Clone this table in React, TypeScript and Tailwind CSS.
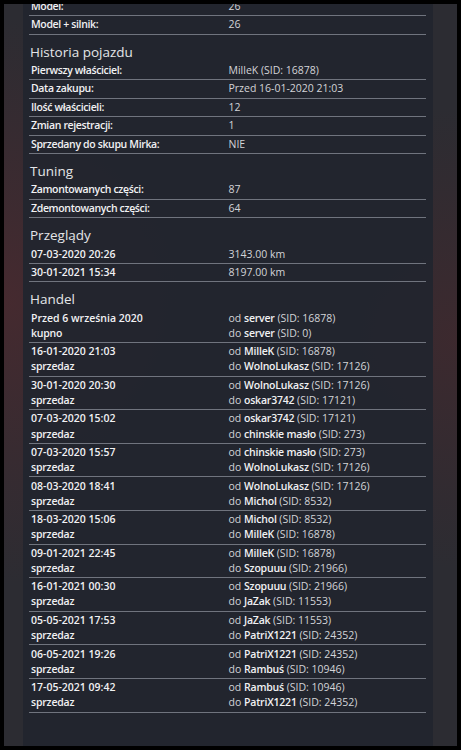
import React from "react";

type Pair = [string, string];

const basic: Pair[] = [
  ["Model:", "26"],
  ["Model + silnik:", "26"],
];

const history: Pair[] = [
  ["Pierwszy właściciel:", "MilleK (SID: 16878)"],
  ["Data zakupu:", "Przed 16-01-2020 21:03"],
  ["Ilość właścicieli:", "12"],
  ["Zmian rejestracji:", "1"],
  ["Sprzedany do skupu Mirka:", "NIE"],
];

const tuning: Pair[] = [
  ["Zamontowanych części:", "87"],
  ["Zdemontowanych części:", "64"],
];

const inspections: Pair[] = [
  ["07-03-2020 20:26", "3143.00 km"],
  ["30-01-2021 15:34", "8197.00 km"],
];

type Trade = {
  date: string;
  kind: string;
  from: [string, number];
  to: [string, number];
};

const trades: Trade[] = [
  { date: "Przed 6 września 2020", kind: "kupno", from: ["server", 16878], to: ["server", 0] },
  { date: "16-01-2020 21:03", kind: "sprzedaz", from: ["MilleK", 16878], to: ["WolnoLukasz", 17126] },
  { date: "30-01-2020 20:30", kind: "sprzedaz", from: ["WolnoLukasz", 17126], to: ["oskar3742", 17121] },
  { date: "07-03-2020 15:02", kind: "sprzedaz", from: ["oskar3742", 17121], to: ["chinskie masło", 273] },
  { date: "07-03-2020 15:57", kind: "sprzedaz", from: ["chinskie masło", 273], to: ["WolnoLukasz", 17126] },
  { date: "08-03-2020 18:41", kind: "sprzedaz", from: ["WolnoLukasz", 17126], to: ["Michol", 8532] },
  { date: "18-03-2020 15:06", kind: "sprzedaz", from: ["Michol", 8532], to: ["MilleK", 16878] },
  { date: "09-01-2021 22:45", kind: "sprzedaz", from: ["MilleK", 16878], to: ["Szopuuu", 21966] },
  { date: "16-01-2021 00:30", kind: "sprzedaz", from: ["Szopuuu", 21966], to: ["JaZak", 11553] },
  { date: "05-05-2021 17:53", kind: "sprzedaz", from: ["JaZak", 11553], to: ["PatriX1221", 24352] },
  { date: "06-05-2021 19:26", kind: "sprzedaz", from: ["PatriX1221", 24352], to: ["Rambuś", 10946] },
  { date: "17-05-2021 09:42", kind: "sprzedaz", from: ["Rambuś", 10946], to: ["PatriX1221", 24352] },
];

function Heading({ children }: { children: React.ReactNode }) {
  return (
    <h2 className="mt-[8px] pl-[1px] text-[13.5px] leading-[19px] text-[#e4e5e8]">
      {children}
    </h2>
  );
}

function PairRows({ rows, boldLabel = true }: { rows: Pair[]; boldLabel?: boolean }) {
  return (
    <div>
      {rows.map(([label, value]) => (
        <div
          key={label}
          className="grid grid-cols-2 border-b border-[#70747e] py-[1.25px] text-[10.5px] leading-[15.05px]"
        >
          <span
            className={`pl-[2px] text-[#f1f1f3] font-semibold ${
              boldLabel ? "tracking-[-0.35px]" : ""
            }`}
          >
            {label}
          </span>
          <span className="pl-[1px] text-[#d3d4d8]">{value}</span>
        </div>
      ))}
    </div>
  );
}

function Person({ dir, who }: { dir: string; who: [string, number] }) {
  return (
    <div>
      {dir} <span className="font-semibold text-[#f1f1f3] tracking-[-0.2px]">{who[0]}</span> (SID: {who[1]})
    </div>
  );
}

export default function App() {
  return (
    <div
      className="h-[750px] w-[461px] overflow-hidden bg-black p-[4px]"
      style={{ fontFamily: '"Open Sans", "Noto Sans", sans-serif' }}
    >
      <div className="flex h-full overflow-hidden bg-[#2c2c32] bg-[radial-gradient(ellipse_at_0%_40%,rgba(90,40,45,0.55),transparent_45%),radial-gradient(ellipse_at_100%_45%,rgba(80,38,42,0.45),transparent_40%),radial-gradient(ellipse_at_50%_100%,rgba(40,40,46,1),transparent_60%)] pl-[19px] pr-[24px]">
        <div className="h-full w-[410px] bg-[#22252e]/95 px-[6px]">
          <div className="-mt-[6.6px] w-[397px]">
            <PairRows rows={basic} />

            <Heading>Historia pojazdu</Heading>
            <PairRows rows={history} />

            <Heading>Tuning</Heading>
            <PairRows rows={tuning} />

            <Heading>Przeglądy</Heading>
            <PairRows rows={inspections} boldLabel={false} />

            <Heading>Handel</Heading>
            <div>
              {trades.map((t, i) => (
                <div
                  key={i}
                  className="grid grid-cols-2 border-b border-[#70747e] py-[1.25px] text-[10.5px] leading-[15.05px]"
                >
                  <div className="pl-[2px] font-semibold text-[#f1f1f3]">
                    <div>{t.date}</div>
                    <div className="tracking-[-0.2px]">{t.kind}</div>
                  </div>
                  <div className="pl-[1px] text-[#d3d4d8]">
                    <Person dir="od" who={t.from} />
                    <Person dir="do" who={t.to} />
                  </div>
                </div>
              ))}
            </div>
          </div>
        </div>
      </div>
    </div>
  );
}
